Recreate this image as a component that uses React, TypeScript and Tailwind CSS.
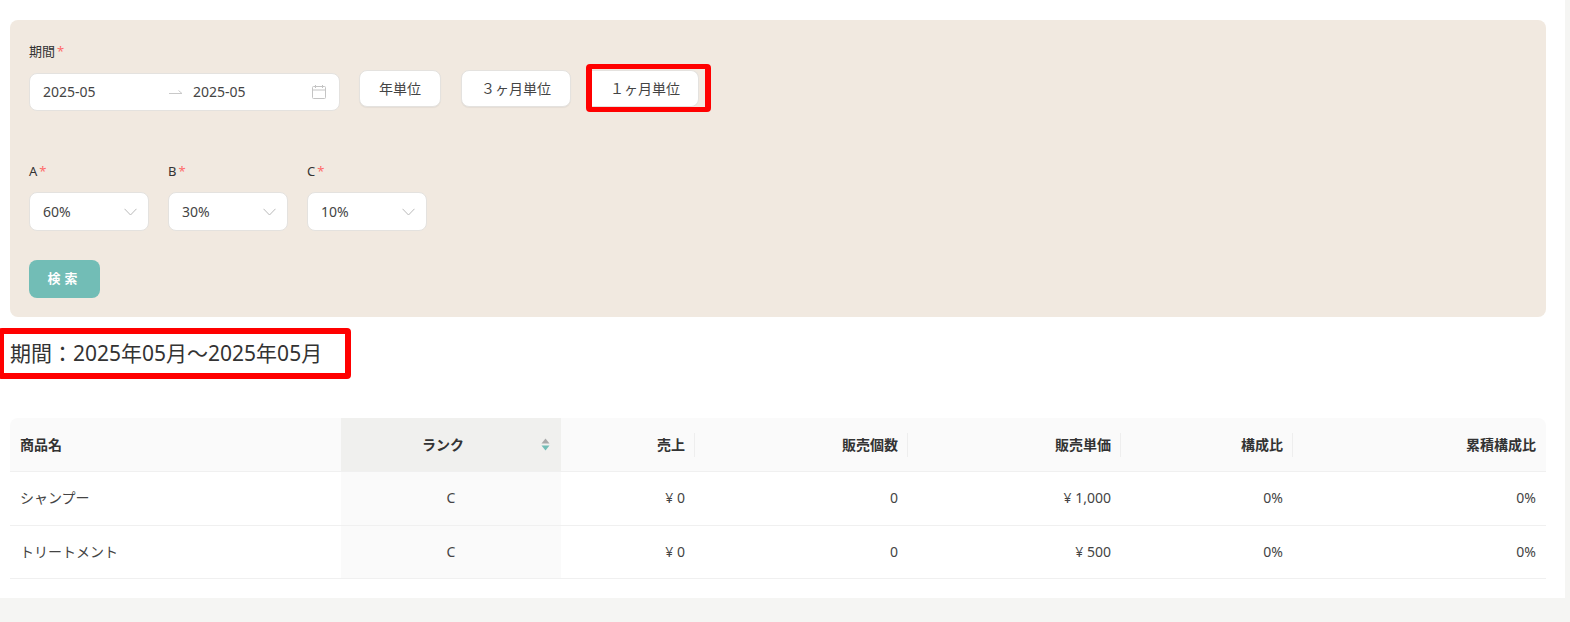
const font = { fontFamily: '"Noto Sans", "Noto Sans CJK JP", sans-serif' };

const columns = [
  { title: '商品名', width: 331, align: 'left' },
  { title: 'ランク', width: 220, align: 'center', sorted: true },
  { title: '売上', width: 134, align: 'right', divider: true },
  { title: '販売個数', width: 213, align: 'right', divider: true },
  { title: '販売単価', width: 213, align: 'right', divider: true },
  { title: '構成比', width: 172, align: 'right', divider: true },
  { title: '累積構成比', width: 253, align: 'right' },
];

const rows = [
  ['シャンプー', 'C', '¥ 0', '0', '¥ 1,000', '0%', '0%'],
  ['トリートメント', 'C', '¥ 0', '0', '¥ 500', '0%', '0%'],
];

function Label({ text }: { text: string }) {
  return (
    <div className="flex h-[20px] items-center text-[13px] text-[#333]">
      {text}
      <span className="ml-[2px] text-[#ff6b6b]">*</span>
    </div>
  );
}

function UnitButton({ text }: { text: string }) {
  return (
    <div className="flex h-[37px] items-center justify-center rounded-lg border border-[#e4e2df] bg-white px-[19px] text-sm text-[#444] shadow-[0_1px_1px_rgba(0,0,0,0.05)]">
      {text}
    </div>
  );
}

function SelectBox({ label, value }: { label: string; value: string }) {
  return (
    <div className="w-[120px]">
      <Label text={label} />
      <div className="mt-[10px] flex h-[39px] items-center justify-between rounded-lg border border-[#e4e2df] bg-white pl-[13px] pr-[11px] text-sm text-[#444]">
        {value}
        <svg width="13" height="8" viewBox="0 0 13 8" fill="none" stroke="#b9b9b9" strokeWidth="1">
          <path d="M0.5 0.8 6.5 7 12.5 0.8" />
        </svg>
      </div>
    </div>
  );
}

function SortIcon() {
  return (
    <svg width="9" height="13" viewBox="0 0 9 13" className="mr-px shrink-0">
      <path d="M4.5 0.5 8.5 5.5H0.5Z" fill="#a9a9a9" />
      <path d="M0.5 7.5H8.5L4.5 12.5Z" fill="#72bdb6" />
    </svg>
  );
}

export default function App() {
  return (
    <div className="h-[622px] w-full overflow-hidden bg-[#f5f5f3] text-[#333]" style={font}>
      <div className="h-[598px] w-[1565px] bg-white pl-[10px] pr-[19px] pt-[20px]">
        <div className="h-[297px] rounded-lg bg-[#f1e9e0] pl-[19px] pt-[22px]">
          <Label text="期間" />
          <div className="mt-[8px] flex items-start">
            <div className="mt-[3px] flex h-[38px] w-[311px] items-center rounded-lg border border-[#e4e2df] bg-white pl-[13px] pr-[13px] text-sm text-[#444]">
              <span className="w-[126px]">2025-05</span>
              <svg width="14" height="8" viewBox="0 0 14 8" fill="none" stroke="#c9c9c9" strokeWidth="1">
                <path d="M0 5.5H13L9.5 2.5" />
              </svg>
              <span className="ml-[10px] flex-1">2025-05</span>
              <svg width="14" height="14" viewBox="0 0 14 14" fill="none" stroke="#c4c4c4" strokeWidth="1">
                <rect x="0.5" y="1.5" width="13" height="12" rx="1" />
                <path d="M0.5 5H13.5M3.5 0V3M10.5 0V3" />
              </svg>
            </div>
            <div className="ml-[19px] flex gap-[20px]">
              <UnitButton text="年単位" />
              <UnitButton text="３ヶ月単位" />
            </div>
            <div className="-mt-[6px] ml-[15px] h-[48px] w-[125px] rounded-sm border-x-[6px] border-y-[5px] border-[#ff0000]">
              <div className="mt-[1px] flex h-[37px] w-[107px] items-center justify-center rounded-r-lg border-y border-r border-[#e4e2df] bg-white text-sm text-[#444]">
                １ヶ月単位
              </div>
            </div>
          </div>
          <div className="mt-[50px] flex gap-[19px]">
            <SelectBox label="A" value="60%" />
            <SelectBox label="B" value="30%" />
            <SelectBox label="C" value="10%" />
          </div>
          <div className="mt-[29px] flex h-[38px] w-[71px] items-center justify-center rounded-lg bg-[#72bdb6] text-[13px] font-bold tracking-[0.3em] text-white">
            検索
          </div>
        </div>

        <div className="-ml-[12px] mt-[11px] flex h-[51px] w-[353px] items-center rounded-sm border-[6px] border-[#ff0000] pl-[6px] text-[21px] text-[#333]">
          期間：2025年05月～2025年05月
        </div>

        <table className="mt-[39px] w-[1536px] table-fixed border-separate border-spacing-0 text-sm">
          <colgroup>
            {columns.map((col) => (
              <col key={col.title} style={{ width: col.width }} />
            ))}
          </colgroup>
          <thead>
            <tr>
              {columns.map((col, i) => (
                <th
                  key={col.title}
                  className={`relative h-[54px] border-b border-[#f0f0f0] px-[10px] font-bold text-[#333] ${
                    col.sorted ? 'bg-[#f0f0ee]' : 'bg-[#fafafa]'
                  } ${col.align === 'left' ? 'text-left' : 'text-right'} ${
                    i === 0 ? 'rounded-tl-lg' : ''
                  } ${i === columns.length - 1 ? 'rounded-tr-lg' : ''}`}
                >
                  {col.sorted ? (
                    <div className="flex items-center gap-[6px]">
                      <span className="flex-1 text-center">{col.title}</span>
                      <SortIcon />
                    </div>
                  ) : (
                    col.title
                  )}
                  {col.divider && (
                    <span className="absolute right-0 top-[15px] h-[24px] w-px bg-[#eeeeee]" />
                  )}
                </th>
              ))}
            </tr>
          </thead>
          <tbody>
            {rows.map((row) => (
              <tr key={row[0]}>
                {row.map((cell, i) => (
                  <td
                    key={i}
                    className={`h-[53.5px] border-b border-[#f0f0f0] px-[10px] text-sm text-[#444] ${
                      i === 0 ? 'text-left' : i === 1 ? 'bg-[#fafafa] text-center' : 'text-right'
                    }`}
                  >
                    {cell}
                  </td>
                ))}
              </tr>
            ))}
          </tbody>
        </table>
      </div>
    </div>
  );
}
